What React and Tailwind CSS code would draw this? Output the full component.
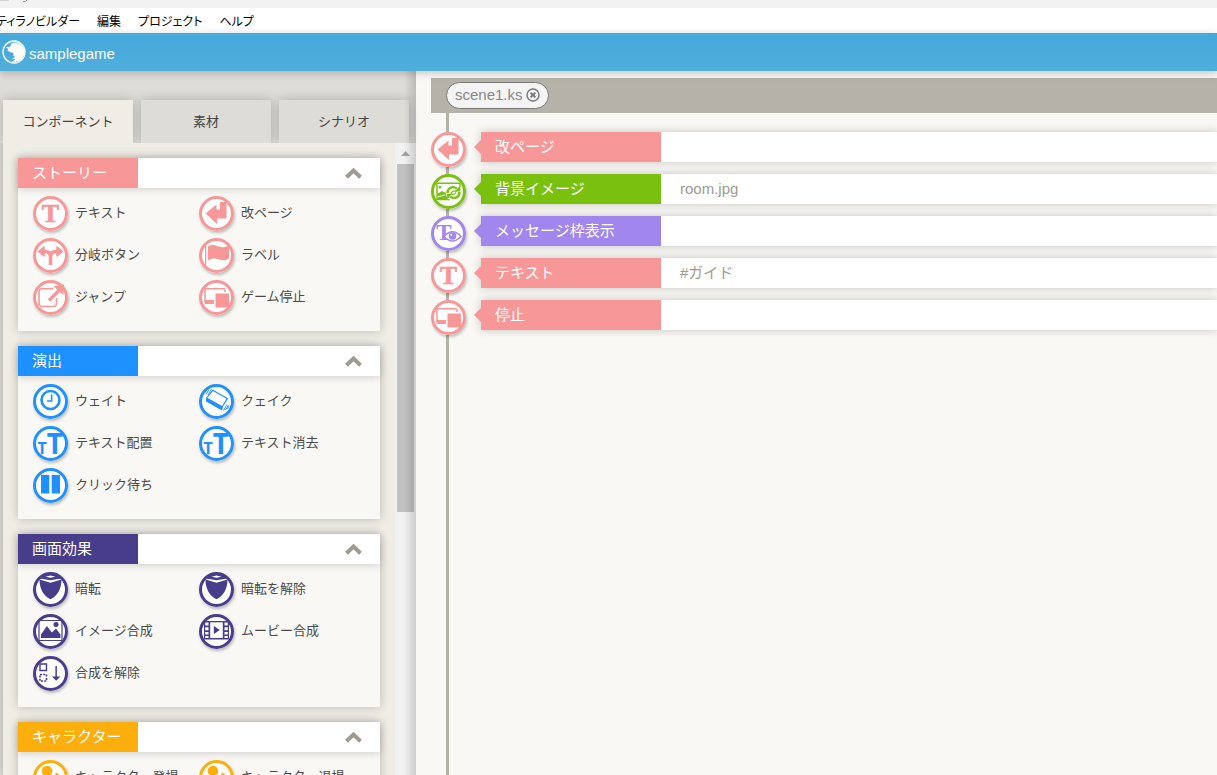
import React from "react";

const SERIF = '"Liberation Serif", serif';
const SANS = '"Noto Sans", sans-serif';

const glyphs = {
  text: (
    <text x="17.5" y="26" textAnchor="middle" fontFamily={SERIF} fontWeight="700" fontSize="26" stroke="currentColor" strokeWidth=".7">T</text>
  ),
  page: <path d="M6.5 17.5 17.5 8.5V13.5H21V6H27.5V22.5H18V28Z" />,
  branch: (
    <>
      <path d="M5.5 13.5 11 9V18ZM29.500 13.500 24 9V18Z" strokeWidth="1.500" stroke="currentColor" strokeLinejoin="round" />
      <path d="M9 13.500h3c3.500 0 5.500 1.500 5.500 5.500V27M26 13.500h-3c-3.500 0-5.500 1.500-5.500 5.500" fill="none" stroke="currentColor" strokeWidth="3.600" />
    </>
  ),
  jump: (
    <>
      <path d="M20 8.700H9a3 3 0 0 0-3 3V23.500a3 3 0 0 0 3 3H20.500a3 3 0 0 0 3-3V18" fill="none" stroke="currentColor" strokeWidth="1.600" />
      <path d="M16 20.500 26 10.500" fill="none" stroke="currentColor" strokeWidth="3.400" />
      <path d="M20.500 6 31 4.500 30 15Z" />
    </>
  ),
  flag: (
    <>
      <path d="M6 7.500h1.300v19.500H6Z" />
      <path d="M9 8.500c4-2.500 7-1.500 10.500 0 3.500 1.300 6.500 1 10.500-1V20.500c-4 2.500-7 2-10.500.8-3.500-1.300-6.500-1.300-10.500 1.200Z" />
    </>
  ),
  stop: (
    <>
      <path d="M6 22V10.200a1.500 1.500 0 0 1 1.500-1.500H24.500a1.500 1.500 0 0 1 1.500 1.500V12" fill="none" stroke="currentColor" strokeWidth="1.500" />
      <path d="M5.500 20H15v4H6.500a1 1 0 0 1-1-1Z" />
      <path d="M16.500 13.500H30V27.500H16.500Z" />
    </>
  ),
  clock: (
    <>
      <circle cx="17.5" cy="16" r="9" fill="none" stroke="currentColor" strokeWidth="2.600" />
      <path d="M18.600 10.500V17H14.200" fill="none" stroke="currentColor" strokeWidth="1.600" />
    </>
  ),
  quake: (
    <>
      <path d="M13.700 6.300 28.300 14.600 23.300 22.800 7.600 14Z" fill="none" stroke="currentColor" strokeWidth="1.200" strokeLinejoin="round" />
      <path d="M7.200 14 23.800 23 23 26.500 7 17.500Z" />
      <path d="M7 10.500l3-5M9 11l3.500-6M5.500 9l2-3M24.500 26.500l3.500-6M26.500 26l3-5M28.500 25l1.500-3" fill="none" stroke="currentColor" strokeWidth=".9" />
    </>
  ),
  size: (
    <text x="4.500" y="27.500" fontFamily={SANS} fontWeight="700">
      <tspan fontSize="16">T</tspan>
      <tspan fontSize="28">T</tspan>
    </text>
  ),
  pause: <path d="M8 7h8.300V25.500H8ZM18.700 7H27V25.500H18.700Z" />,
  curtain: (
    <>
      <path d="M9 3.500Q17.500 0 26 3.500L28 6.500 17.500 8.300 7 6.500Z" />
      <path d="M12.500 4.700 17.500 3.500 22.500 4.700 17.500 5.700Z" fill="#fff" />
      <path d="M6.500 7.500 17.500 10.700 28.500 7.500C28.500 17 24 24.500 17.500 27.200 11 24.500 6.500 17 6.500 7.500Z" />
    </>
  ),
  image: (
    <>
      <path d="M6 6.500H29V26.500H6Z" fill="none" stroke="currentColor" strokeWidth="1.200" />
      <path d="M8 24V20.500L14 12 18.800 18.500 23 14.500 27.500 20.500V24Z" />
      <circle cx="23" cy="10.500" r="2.500" />
    </>
  ),
  movie: (
    <>
      <path d="M5 7H30V25.500H5Z" />
      <path d="M11.200 8.300H23.800V24H11.200Z" fill="#fff" />
      <path d="M6.200 8.500h3.300v3H6.200ZM6.200 13.200h3.300v3H6.200ZM6.200 18h3.300v2.500H6.200ZM6.200 22h3.300v2H6.200ZM25.500 8.500h3.300v3h-3.300ZM25.500 13.200h3.300v3h-3.300ZM25.500 18h3.300v2.500h-3.300ZM25.500 22h3.300v2h-3.300Z" fill="#fff" />
      <path d="M14.800 12 20.800 16 14.800 20Z" />
    </>
  ),
  unmerge: (
    <>
      <path d="M7 8h6.500v6.500H7Z" fill="none" stroke="currentColor" strokeWidth="1.400" />
      <path d="M7 18.500h6.500v6.500H7Z" fill="none" stroke="currentColor" strokeWidth="1.600" strokeDasharray="2 1.300" />
      <path d="M22.400 10h1.500v10.500h3.400L23.200 24.800 19 20.500h3.400Z" />
    </>
  ),
  person: (
    <>
      <circle cx="14" cy="11" r="5.300" />
      <path d="M4.500 21c2-4 5-4.500 9.500-4.500 2.500 0 4 .5 5.500 1.500l-5 8c-4 1-8-1-10-5Z" />
      <path d="M23.500 12.500 27.500 15.500 20 25 16 26.500 16.500 22Z" />
    </>
  ),
  background: (
    <>
      <path d="M21 9.300H6V25.500H19" fill="none" stroke="currentColor" strokeWidth="1.500" />
      <path d="M20 9.300H29V13" fill="none" stroke="currentColor" strokeWidth="1.500" />
      <circle cx="9" cy="13" r="1.500" />
      <path d="M6 20 11 17 14 18.500 18 13 19 22 15 25.500H6Z" />
      <path d="M6 23 14 21" stroke="#fff" strokeWidth="1" />
      <circle cx="22.5" cy="18.5" r="8" fill="#fff" />
      <path d="M16.500 19c0-5 5-7.500 9.500-4.500M28.500 18c0 5.500-5 7.500-9.500 4.800" fill="none" stroke="currentColor" strokeWidth="2.400" />
      <path d="M24 17.500 29.500 17.500 29 11.500ZM21 19.500 15.500 20 16.500 25.500Z" />
      <path d="M20 19.500Q22.500 15 25.500 18M25 18.500Q22.500 22.500 20 19.500" fill="none" stroke="currentColor" strokeWidth="1.200" />
    </>
  ),
  message: (
    <>
      <text x="13" y="23.500" textAnchor="middle" fontFamily={SERIF} fontWeight="700" fontSize="23">T</text>
      <path d="M13 20.500Q21.500 11 30 20.500 21.500 29.500 13 20.500Z" fill="#fff" stroke="currentColor" strokeWidth="1.500" />
      <circle cx="21.5" cy="20" r="3.800" />
      <circle cx="20.300" cy="18.700" r="1" fill="#fff" />
    </>
  ),
};

function RoundIcon({ name, color }) {
  return (
    <span className={`block size-[35px] shrink-0 rounded-full bg-white shadow-[1px_2px_3px_rgba(0,0,0,0.25)] ${color}`}>
      <svg viewBox="0 0 35 35" className="block size-full" fill="currentColor" aria-hidden="true">
        {glyphs[name]}
        <circle cx="17.5" cy="17.5" r="16" fill="none" stroke="currentColor" strokeWidth="3" />
      </svg>
    </span>
  );
}

const groups = [
  {
    title: "ストーリー",
    bg: "bg-[#f79797]",
    fg: "text-[#f79797]",
    items: [
      ["text", "テキスト"],
      ["page", "改ページ"],
      ["branch", "分岐ボタン"],
      ["flag", "ラベル"],
      ["jump", "ジャンプ"],
      ["stop", "ゲーム停止"],
    ],
  },
  {
    title: "演出",
    bg: "bg-[#1e90ff]",
    fg: "text-[#1e90ff]",
    items: [
      ["clock", "ウェイト"],
      ["quake", "クェイク"],
      ["size", "テキスト配置"],
      ["size", "テキスト消去"],
      ["pause", "クリック待ち"],
    ],
  },
  {
    title: "画面効果",
    bg: "bg-[#483d8b]",
    fg: "text-[#483d8b]",
    items: [
      ["curtain", "暗転"],
      ["curtain", "暗転を解除"],
      ["image", "イメージ合成"],
      ["movie", "ムービー合成"],
      ["unmerge", "合成を解除"],
    ],
  },
  {
    title: "キャラクター",
    bg: "bg-[#fcaf0c]",
    fg: "text-[#fcaf0c]",
    items: [
      ["person", "キャラクター登場"],
      ["person", "キャラクター退場"],
    ],
  },
];

const steps = [
  { icon: "page", title: "改ページ", value: "", bg: "bg-[#f79797]", fg: "text-[#f79797]" },
  { icon: "background", title: "背景イメージ", value: "room.jpg", bg: "bg-[#7ac10f]", fg: "text-[#7ac10f]" },
  { icon: "message", title: "メッセージ枠表示", value: "", bg: "bg-[#a186ee]", fg: "text-[#a186ee]" },
  { icon: "text", title: "テキスト", value: "#ガイド", bg: "bg-[#f79797]", fg: "text-[#f79797]" },
  { icon: "stop", title: "停止", value: "", bg: "bg-[#f79797]", fg: "text-[#f79797]" },
];

const menus = ["ティラノビルダー", "編集", "プロジェクト", "ヘルプ"];
const tabs = ["コンポーネント", "素材", "シナリオ"];

function Group({ title, bg, fg, items }) {
  return (
    <section className="shrink-0 bg-[#f9f8f4] shadow-[0_0_10px_rgba(0,0,0,0.22)]">
      <header className="flex h-[30px] items-center bg-white shadow-[0_1px_8px_rgba(0,0,0,0.18)]">
        <h2 className={`flex h-full w-[120px] items-center pl-[14px] text-[15px] text-white ${bg}`}>{title}</h2>
        <button type="button" aria-label={title} className="ml-auto mr-[18px] text-[#9e9b90]">
          <svg viewBox="0 0 17 12" className="block h-3 w-[17px]" fill="none" stroke="currentColor" strokeWidth="4" aria-hidden="true">
            <path d="M1.500 10.300 8.500 3.500 15.500 10.300" />
          </svg>
        </button>
      </header>
      <div className="grid min-h-[143px] grid-cols-[166px_166px] content-start gap-y-[7px] pt-2 pb-4 pl-[15px]">
        {items.map(([icon, label]) => (
          <button type="button" key={label} className="flex items-center gap-[7px] text-left text-[13px] leading-5 text-[#4a4a4a] whitespace-nowrap">
            <RoundIcon name={icon} color={fg} />
            <span className="pb-[2px]">{label}</span>
          </button>
        ))}
      </div>
    </section>
  );
}

function Sidebar() {
  return (
    <aside className="relative flex w-[416px] shrink-0 flex-col bg-[#dddcd7] pt-[29px]">
      <div role="tablist" className="flex shrink-0 gap-2 pl-[3px]">
        {tabs.map((tab, i) => (
          <button
            type="button"
            role="tab"
            key={tab}
            aria-selected={i === 0}
            className={`h-[43px] w-[130px] text-[13px] text-[#444] shadow-[0_0_10px_rgba(0,0,0,0.22)] ${i === 0 ? "bg-[#f0ede6]" : "bg-[#dddcd7]"}`}
          >
            {tab}
          </button>
        ))}
      </div>
      <div className="relative ml-[3px] flex min-h-0 flex-1 bg-[#f0ede6] shadow-[0_0_10px_rgba(0,0,0,0.22)] [clip-path:inset(0_0_0_-3px)]">
        <div className="flex flex-1 flex-col gap-[15px] overflow-hidden pt-[15px] pr-[15px] pl-[15px]">
          {groups.map((g) => (
            <Group key={g.title} {...g} />
          ))}
        </div>
        <div className="flex w-[21px] shrink-0 flex-col items-center bg-[#f1f1f1] pt-2" aria-hidden="true">
          <svg viewBox="0 0 9 5" className="block h-[5px] w-[9px]" fill="#a3a3a3">
            <path d="M0 5 4.500 0 9 5Z" />
          </svg>
          <span className="mt-2 h-[348px] w-[17px] bg-[#c1c1c1]" />
        </div>
      </div>
      <span className="pointer-events-none absolute inset-y-0 right-0 w-3 bg-linear-to-r from-transparent to-black/15" />
    </aside>
  );
}

function Editor() {
  return (
    <main className="flex min-w-0 flex-1 flex-col bg-[#f9f8f4] pt-[7px] pl-[15px]">
      <div className="flex h-[35px] shrink-0 items-center bg-[#b5b2aa] pl-[15px]">
        <div className="flex h-[27px] items-center gap-[3px] rounded-full border border-[#777] bg-[#f4f4f4] px-2 text-[15px] text-[#888]">
          <span>scene1.ks</span>
          <button type="button" aria-label="閉じる" className="pb-[2px]">
            <svg viewBox="0 0 14 14" className="block size-[14px]" fill="none" stroke="#777" strokeWidth="1.400" aria-hidden="true">
              <circle cx="7" cy="7" r="6" />
              <path d="M4.600 4.600 9.400 9.400M9.400 4.600 4.600 9.400" strokeWidth="2" />
            </svg>
          </button>
        </div>
      </div>
      <div className="grid flex-1 grid-cols-1">
        <span className="col-start-1 row-start-1 ml-[15px] w-[3px] bg-[#b5b2aa]" />
        <ol className="col-start-1 row-start-1 flex flex-col gap-[7px] pt-[19px]">
          {steps.map((s) => (
            <li key={s.title} className="flex h-[35px] items-start">
              <RoundIcon name={s.icon} color={s.fg} />
              <svg viewBox="0 0 7 14" className={`relative z-10 mt-2 ml-2 block h-[14px] w-[7px] shrink-0 ${s.fg}`} fill="currentColor" aria-hidden="true">
                <path d="M7 0V14L0 7Z" />
              </svg>
              <div className="flex h-[30px] flex-1 items-center bg-white text-[15px] shadow-[0_0_10px_rgba(0,0,0,0.22)]">
                <span className={`flex h-full w-[180px] items-center pl-[14px] text-white ${s.bg}`}>{s.title}</span>
                <span className="pl-[19px] text-[#9e9b90]">{s.value}</span>
              </div>
            </li>
          ))}
        </ol>
      </div>
    </main>
  );
}

export default function App() {
  return (
    <div className="flex h-screen flex-col overflow-hidden bg-[#f9f8f4] font-['Liberation_Sans','Noto_Sans_CJK_JP',sans-serif]">
      <div className="h-2 shrink-0 bg-[#f2f2f2]">
        <svg viewBox="0 0 30 8" className="block h-2 w-[30px]" fill="none" aria-hidden="true">
          <path d="M0 .5H9" stroke="#d4d4d4" />
          <path d="M27 0 25.500 1.500H23" stroke="#999" />
        </svg>
      </div>
      <nav className="flex h-[25px] shrink-0 items-center gap-[17px] bg-white text-[12px] text-black">
        {menus.map((m, i) => (
          <button type="button" key={m} className={`font-['Noto_Sans_CJK_JP',sans-serif] whitespace-nowrap [font-feature-settings:'palt'] ${i === 0 ? "-ml-1" : ""}`}>
            {m}
          </button>
        ))}
      </nav>
      <header className="relative z-10 flex h-[38px] shrink-0 items-center gap-[3px] bg-linear-to-b from-[#45a8db] to-[#4faedb] pl-[2px] text-white shadow-[0_2px_8px_rgba(0,0,0,0.22)]">
        <svg viewBox="0 0 24 24" className="block size-6" aria-hidden="true">
          <circle cx="12" cy="12" r="11" fill="none" stroke="currentColor" strokeWidth="1.300" />
          <path d="M9 3.500C13 1.500 19 2.500 21.500 8c2 5 .5 10-4 12.500-2.500 1.300-5 1.500-8 1 2-.5 3.300-1.300 3.800-2.500l-3.500-.6 3.700-1.400c-2.500-.6-3-2.300-1.500-4.200-2 .2-3.500-.3-4.500-1.300L5.500 11l.8-2L3.800 7.500 8.500 6.500Z" fill="currentColor" />
        </svg>
        <span className="pt-1 text-[15px]">samplegame</span>
      </header>
      <div className="flex min-h-0 flex-1">
        <Sidebar />
        <Editor />
      </div>
    </div>
  );
}
